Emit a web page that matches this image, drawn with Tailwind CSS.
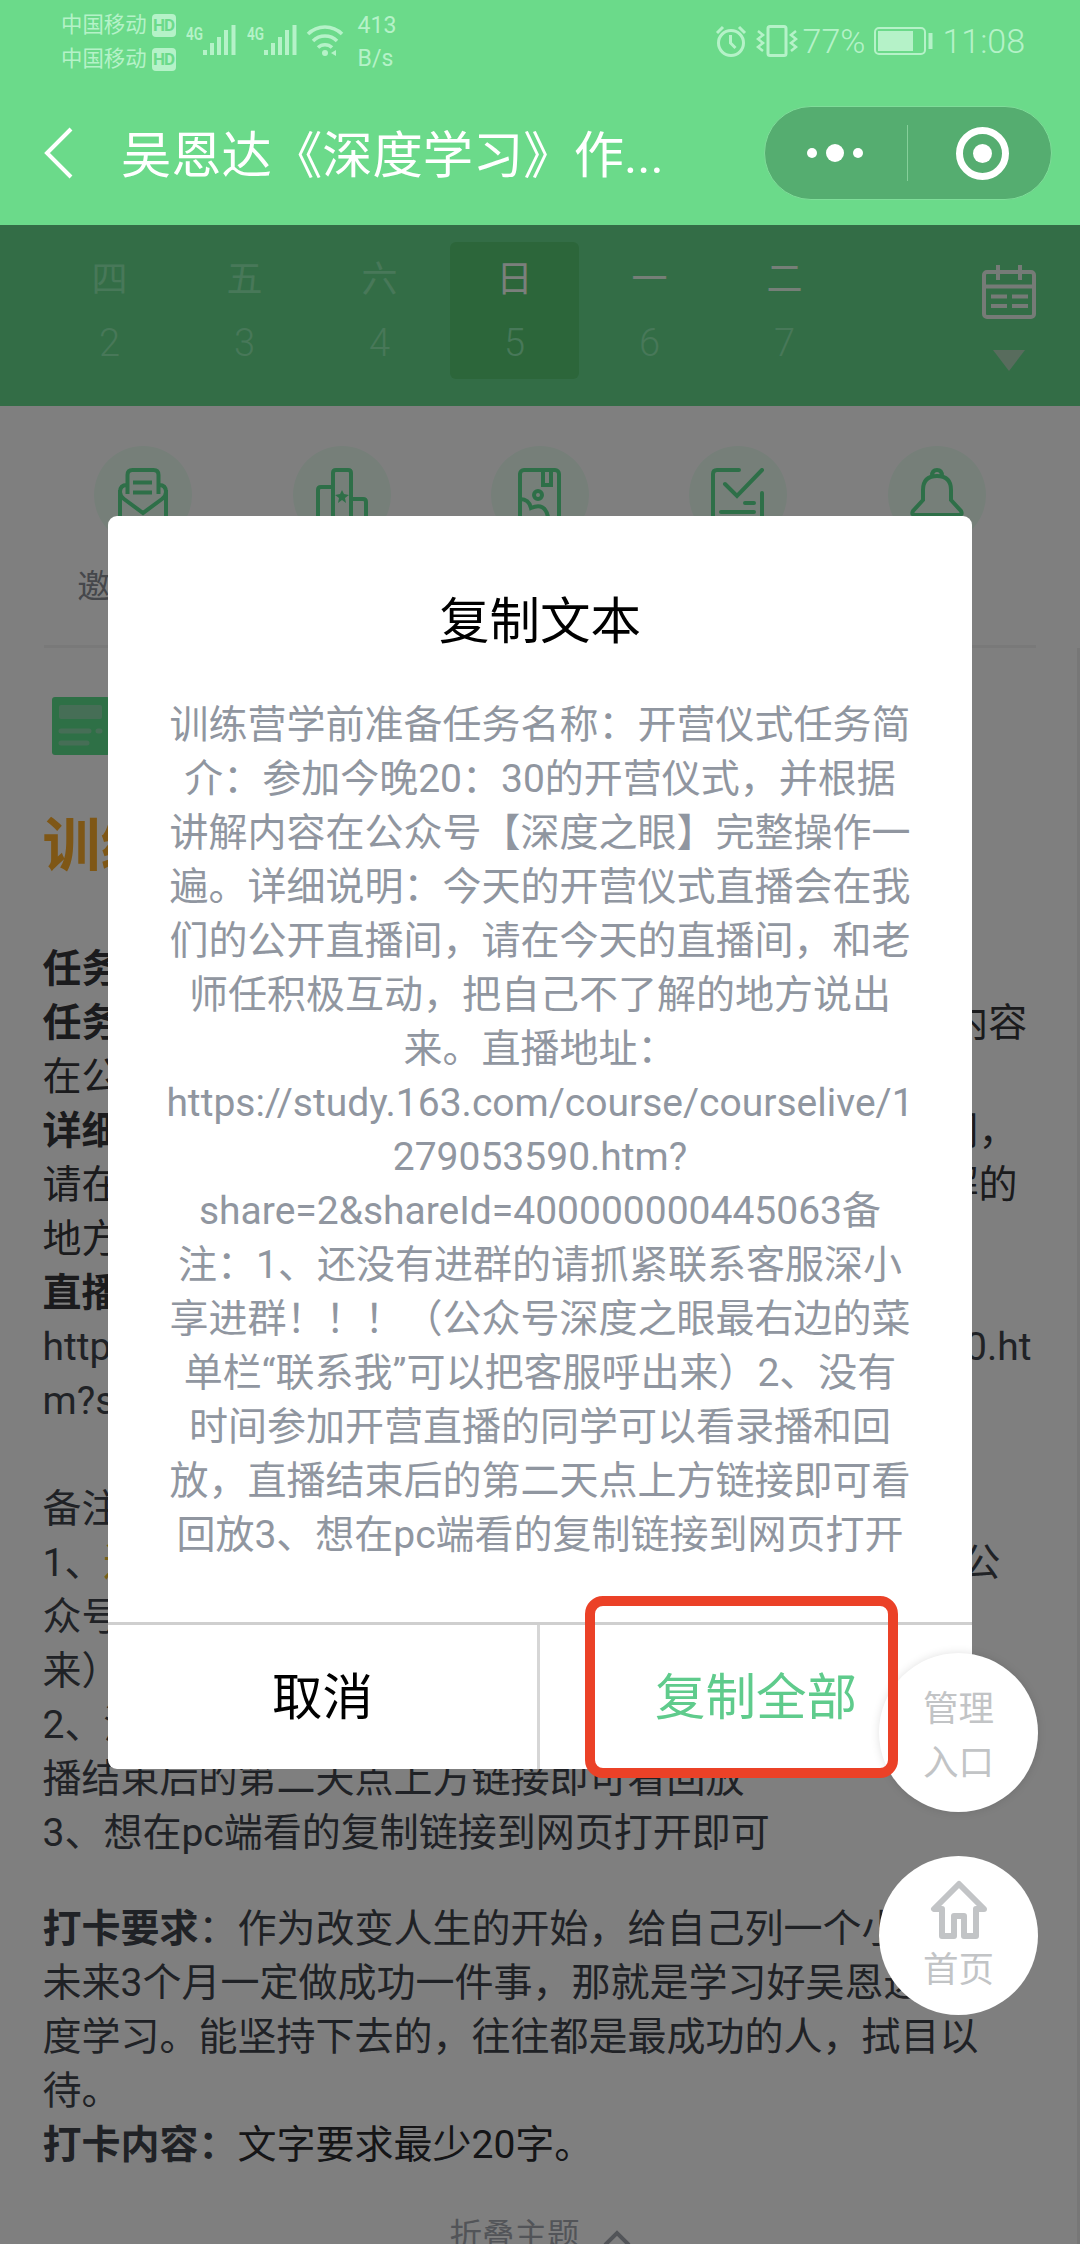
<!DOCTYPE html>
<html lang="zh-CN">
<head>
<meta charset="utf-8">
<title>吴恩达《深度学习》作业</title>
<script src="https://cdn.jsdelivr.net/npm/@tailwindcss/browser@4"></script>
</head>
<body>
<div class="relative flex h-[2244px] w-[1080px] flex-col overflow-hidden bg-white font-['Roboto','Noto_Sans_CJK_SC',sans-serif]">

  <!-- Status bar and title bar -->
  <header class="flex h-[225px] shrink-0 flex-col bg-[#6bda8a]">
    <div class="flex h-[84px] items-center justify-between pr-[55px] pl-[61px] text-[#b5f2c8]">
      <div class="flex items-center">
        <div class="flex flex-col text-[21.4px] leading-[34px]">
          <div class="flex items-center gap-[5px]">中国移动<span class="flex h-[23px] w-6 items-center justify-center rounded-[4px] bg-[#b5f2c8] text-[17px] font-bold tracking-tighter text-[#6bda8a]">HD</span></div>
          <div class="flex items-center gap-[5px]">中国移动<span class="flex h-[23px] w-6 items-center justify-center rounded-[4px] bg-[#b5f2c8] text-[17px] font-bold tracking-tighter text-[#6bda8a]">HD</span></div>
        </div>
        <svg class="mb-[4px] ml-[10px]" width="50" height="34" viewBox="0 0 50 34" fill="none" stroke="currentColor" stroke-width="4">
          <text x="0" y="17" font-size="19" font-weight="600" textLength="17" lengthAdjust="spacingAndGlyphs" fill="currentColor" stroke="none">4G</text>
          <path d="M19 27v5M26 20v12M33 14v18M40 7v25M47.500 2v30"/>
        </svg>
        <svg class="mb-[4px] ml-[11px]" width="50" height="34" viewBox="0 0 50 34" fill="none" stroke="currentColor" stroke-width="4">
          <text x="0" y="17" font-size="19" font-weight="600" textLength="17" lengthAdjust="spacingAndGlyphs" fill="currentColor" stroke="none">4G</text>
          <path d="M19 27v5M26 20v12M33 14v18M40 7v25M47.500 2v30"/>
        </svg>
        <svg class="mb-[4px] ml-[9px]" width="38" height="34" viewBox="0 0 38 34" fill="none" stroke="currentColor" stroke-width="3.500">
          <path d="M2 11a24 24 0 0 1 34 0M7 18a17 17 0 0 1 24 0M12 24.500a10 10 0 0 1 14 0"/>
          <circle cx="19" cy="30" r="3" fill="currentColor" stroke="none"/><path d="M30 27v6l-5-3z" fill="currentColor" stroke="none"/>
        </svg>
        <div class="ml-[14px] flex flex-col text-[23px] leading-[33px]"><span>413</span><span>B/s</span></div>
      </div>
      <div class="flex items-center pb-[3px]">
        <svg width="32" height="34" viewBox="0 0 32 34" fill="none" stroke="currentColor" stroke-width="3">
          <circle cx="16" cy="19" r="12.500"/><path d="M15.500 11v8l5 5M2 9l6-6M30 9l-6-6"/>
        </svg>
        <svg class="ml-[9px]" width="42" height="34" viewBox="0 0 42 34" fill="none" stroke="currentColor" stroke-width="3">
          <rect x="12" y="2.500" width="18" height="29" rx="2"/><path d="M2 7l5 4-5 4 5 4-5 4 5 4M40 7l-5 4 5 4-5 4 5 4-5 4" stroke-width="2.500"/>
        </svg>
        <span class="ml-[5px] text-[34px] leading-[36px] font-light">77%</span>
        <svg class="ml-[9px]" width="60" height="30" viewBox="0 0 60 30" fill="none" stroke="currentColor" stroke-width="2">
          <rect x="1" y="2" width="50" height="26" rx="4"/><rect x="4" y="5" width="35" height="20" fill="currentColor" stroke="none"/><path d="M56.500 7v16" stroke-width="4"/>
        </svg>
        <span class="ml-[8px] text-[34px] leading-[36px] font-light">11:08</span>
      </div>
    </div>
    <div class="flex h-[138px] items-center pr-[28px] pl-[44px] text-white">
      <svg width="30" height="54" viewBox="0 0 30 54" fill="none" stroke="currentColor" stroke-width="4"><path d="M27 3L3 27l24 24"/></svg>
      <h1 class="mt-[7px] ml-[47px] w-[560px] text-[50.300px] leading-none whitespace-nowrap">吴恩达《深度学习》作...</h1>
      <div class="ml-auto flex h-[94px] w-[288px] items-center rounded-full border border-[#7fdd99] bg-[#55ad70]">
        <div class="flex h-[56px] w-[143px] items-center justify-center gap-[9px] border-r border-[#86cf9a] pr-[2px]">
          <i class="size-[10px] rounded-full bg-white"></i><i class="size-[18px] rounded-full bg-white"></i><i class="size-[10px] rounded-full bg-white"></i>
        </div>
        <div class="flex flex-1 justify-center pl-[5px]">
          <span class="flex size-[53px] items-center justify-center rounded-full border-[7px] border-white"><i class="size-[19px] rounded-full bg-white"></i></span>
        </div>
      </div>
    </div>
  </header>

  <!-- Page content, dimmed while the dialog is open -->
  <main class="relative flex flex-1 flex-col">
    <section class="flex h-[181px] shrink-0 items-start justify-between bg-[#66da8c] pt-[17px] pr-[43px] pl-[42px] text-[36px] leading-[64px] text-[#90f0b2]">
      <div class="grid grid-cols-[repeat(6,135px)] text-center">
        <div class="pt-1.5">四<div class="text-[38px] leading-[62px] font-light">2</div></div>
        <div class="pt-1.5">五<div class="text-[38px] leading-[62px] font-light">3</div></div>
        <div class="pt-1.5">六<div class="text-[38px] leading-[62px] font-light">4</div></div>
        <div class="mx-[3px] h-[137px] rounded-md bg-[#58cc74] pt-1.5 text-[#f6fff8]">日<div class="text-[38px] leading-[62px] font-light text-[#90f0b2]">5</div></div>
        <div class="pt-1.5"><span class="text-[#ecfff0]">一</span><div class="text-[38px] leading-[62px] font-light">6</div></div>
        <div class="pt-1.5"><span class="text-[#ecfff0]">二</span><div class="text-[38px] leading-[62px] font-light">7</div></div>
      </div>
      <div class="flex w-[56px] shrink-0 flex-col items-center pt-[22px]">
        <svg class="shrink-0" width="56" height="56" viewBox="0 0 56 56" fill="none" stroke="#ecf6ee" stroke-width="4">
          <rect x="3" y="8" width="50" height="45" rx="3"/><path d="M3 22.500h50M17 1v15M39 1v15M10 32.500h16M31 32.500h16M10 42h16M31 42h16"/>
        </svg>
        <svg class="mt-[30px] shrink-0" width="32" height="21" viewBox="0 0 32 21"><path d="M0 0h32L16 21z" fill="#b0d8bb"/></svg>
      </div>
    </section>

    <section class="mr-[44px] ml-[44px] grid h-[242px] shrink-0 grid-cols-5 justify-items-center border-b-[3px] border-[#f2f2f2] pt-10 text-[33px] text-[#8a8e96]">
      <div class="flex flex-col items-center gap-[18px]">
        <span class="flex size-[98px] items-center justify-center rounded-full bg-[#ecfff3]">
          <svg width="54" height="54" viewBox="0 0 54 54" fill="none" stroke="#5cdf90" stroke-width="4"><path d="M11.500 26V7q0-5 5-5h21q5 0 5 5v19M17 14.500h19M17 24.500h19M11 17q-7 0-7 7 0 4 4 7l19 14 19-14q4-3 4-7 0-7-7-7M4 22v30h46V22"/></svg>
        </span>
        <span class="whitespace-nowrap">邀请好友</span>
      </div>
      <div>
        <span class="flex size-[98px] items-center justify-center rounded-full bg-[#ecfff3]">
          <svg width="54" height="54" viewBox="0 0 54 54" fill="none" stroke="#5cdf90" stroke-width="4"><path d="M3 52V22q0-3 3-3h12v33M18 52V5q0-3 3-3h12q3 0 3 3v47M36 31h12q3 0 3 3v18"/><path d="M27 22l2 4 5 1-4 3 1 5-4-3-4 3 1-5-4-3 5-1z" fill="#5cdf90" stroke="none"/></svg>
        </span>
      </div>
      <div>
        <span class="flex size-[98px] items-center justify-center rounded-full bg-[#ecfff3]">
          <svg width="54" height="54" viewBox="0 0 54 54" fill="none" stroke="#5cdf90" stroke-width="4"><rect x="7" y="2" width="39" height="50" rx="4"/><path d="M30 2v15h8V2M7 31q9 0 11 9 14-6 17 9"/><circle cx="25" cy="27" r="4"/></svg>
        </span>
      </div>
      <div>
        <span class="flex size-[98px] items-center justify-center rounded-full bg-[#ecfff3]">
          <svg width="54" height="54" viewBox="0 0 54 54" fill="none" stroke="#5cdf90" stroke-width="4" stroke-linecap="round"><path d="M28 2H6q-4 0-4 4v46h49V25M14 16l12 12L51 2M34 35h9M10 44h33"/></svg>
        </span>
      </div>
      <div>
        <span class="flex size-[98px] items-center justify-center rounded-full bg-[#ecfff3]">
          <svg width="54" height="54" viewBox="0 0 54 54" fill="none" stroke="#5cdf90" stroke-width="4"><path d="M13 22q0-14 14-14t14 14v10l10 11q2 4-2 4H5q-4 0-2-4l10-11zM22 8q0-6 5-6t5 6"/></svg>
        </span>
      </div>
    </section>

    <section class="flex flex-col px-[42.500px] pt-[49px] text-[39px] leading-[54px] whitespace-nowrap text-[#41454c]">
      <svg class="ml-[9px]" width="58" height="58" viewBox="0 0 58 58">
        <rect width="58" height="58" rx="3" fill="#5ce08c"/><rect x="7" y="8" width="43" height="14" rx="2" fill="#8cdcac"/><path d="M9 34h28M46 34h2M9 46h26" stroke="#8cdcac" stroke-width="5" stroke-linecap="round"/>
      </svg>
      <h2 class="mt-[61px] text-[58px] leading-[60px] font-bold text-[#ffaf2c]">训练营</h2>
      <div class="mt-[66px] text-[#36373a]">
        <p><b>任务名称：</b>开营仪式</p>
        <p><b>任务简介：</b>参加今晚20：30的开营仪式，并根据讲解内容</p>
        <p>在公众号【深度之眼】完整操作一遍。</p>
        <p><b>详细说明：</b>今天的开营仪式直播会在我们的公开直播间，</p>
        <p>请在今天的直播间，和老师任积极互动，把自己不了解的</p>
        <p>地方说出来。</p>
        <p><b>直播地址：</b></p>
      </div>
      <p>https://study.163.com/course/courselive/1279053590.ht</p>
      <p>m?share=2&amp;shareId=400000000445063</p>
      <p class="mt-[54px]">备注：</p>
      <p>1、<span class="text-[#f0c030]">还没有进群的请抓紧联系客服深小享进群！！！</span>（公</p>
      <p>众号深度之眼最右边的菜单栏“联系我”可以把客服呼出</p>
      <p>来）</p>
      <p>2、没有时间参加开营直播的同学可以看录播和回放，直</p>
      <p>播结束后的第二天点上方链接即可看回放</p>
      <p>3、想在pc端看的复制链接到网页打开即可</p>
      <p class="mt-[42px]"><b>打卡要求</b>：作为改变人生的开始，给自己列一个小目标，</p>
      <p>未来3个月一定做成功一件事，那就是学习好吴恩达深</p>
      <p>度学习。能坚持下去的，往往都是最成功的人，拭目以</p>
      <p>待。</p>
      <p><b>打卡内容：</b><span class="text-[#2a2b2e]">文字要求最少20字。</span></p>
    </section>
    <div class="mt-[37px] flex items-center justify-center gap-[23px] text-[32.500px] leading-[54px] text-[#a4a9b0]">折叠主题
      <svg class="mt-[4px]" width="28" height="16" viewBox="0 0 28 16" fill="none" stroke="currentColor" stroke-width="4"><path d="M2 15L14 3l12 12"/></svg>
    </div>

    <div class="absolute top-[423px] right-0 bottom-0 w-[3px] bg-[#eeeeee]"></div>
    <div class="absolute inset-0 bg-black/50"></div>
  </main>

  <!-- Copy dialog -->
  <div class="absolute top-[516px] left-[108px] flex h-[1253px] w-[864px] flex-col overflow-hidden rounded-[9px] bg-white text-center whitespace-nowrap">
    <h2 class="mt-[73px] text-[50.500px] leading-[66px] text-black">复制文本</h2>
    <div class="mt-[43px] text-[39px] leading-[54px] text-[#9096a0]">
      <p>训练营学前准备任务名称：开营仪式任务简</p>
      <p>介：参加今晚20：30的开营仪式，并根据</p>
      <p>讲解内容在公众号【深度之眼】完整操作一</p>
      <p>遍。详细说明：今天的开营仪式直播会在我</p>
      <p>们的公开直播间，请在今天的直播间，和老</p>
      <p>师任积极互动，把自己不了解的地方说出</p>
      <p>来。直播地址：</p>
      <p>https://study.163.com/course/courselive/1</p>
      <p>279053590.htm?</p>
      <p>share=2&amp;shareId=400000000445063备</p>
      <p>注：1、还没有进群的请抓紧联系客服深小</p>
      <p>享进群！！！（公众号深度之眼最右边的菜</p>
      <p>单栏“联系我”可以把客服呼出来）2、没有</p>
      <p>时间参加开营直播的同学可以看录播和回</p>
      <p>放，直播结束后的第二天点上方链接即可看</p>
      <p>回放3、想在pc端看的复制链接到网页打开</p>
    </div>
    <div class="mt-auto grid h-[147px] grid-cols-2 border-t-[3px] border-[#cfcfcf] text-[50.500px] leading-[146px]">
      <div class="h-[144px] border-r-[3px] border-[#d6d6d6] text-black">取消</div>
      <div class="h-[144px] text-[#5fcb8c]">复制全部</div>
    </div>
  </div>

  <!-- Floating buttons -->
  <div class="absolute top-[1653px] right-[42px] flex flex-col gap-[44px] text-[35.500px] text-[#c2c4c6]">
    <div class="flex size-[159px] flex-col items-center justify-center rounded-full bg-white pt-[6px] leading-[54px] shadow-[0_0_10px_rgba(0,0,0,0.12)]"><span>管理</span><span>入口</span></div>
    <div class="flex size-[159px] flex-col items-center rounded-full bg-white pt-[24px] leading-[60px]">
      <svg class="shrink-0" width="58" height="60" viewBox="0 0 58 60" fill="none" stroke="#c2c4c6" stroke-width="6" stroke-linejoin="round"><path d="M29 4L4 29h8v27h12V36h10v20h12V29h8z"/></svg>
      <span>首页</span>
    </div>
  </div>

  <!-- Highlight around the copy button -->
  <div class="absolute top-[1596px] left-[585px] h-[182px] w-[313px] rounded-[18px] border-[10px] border-[#eb4127]"></div>
</div>
</body>
</html>
